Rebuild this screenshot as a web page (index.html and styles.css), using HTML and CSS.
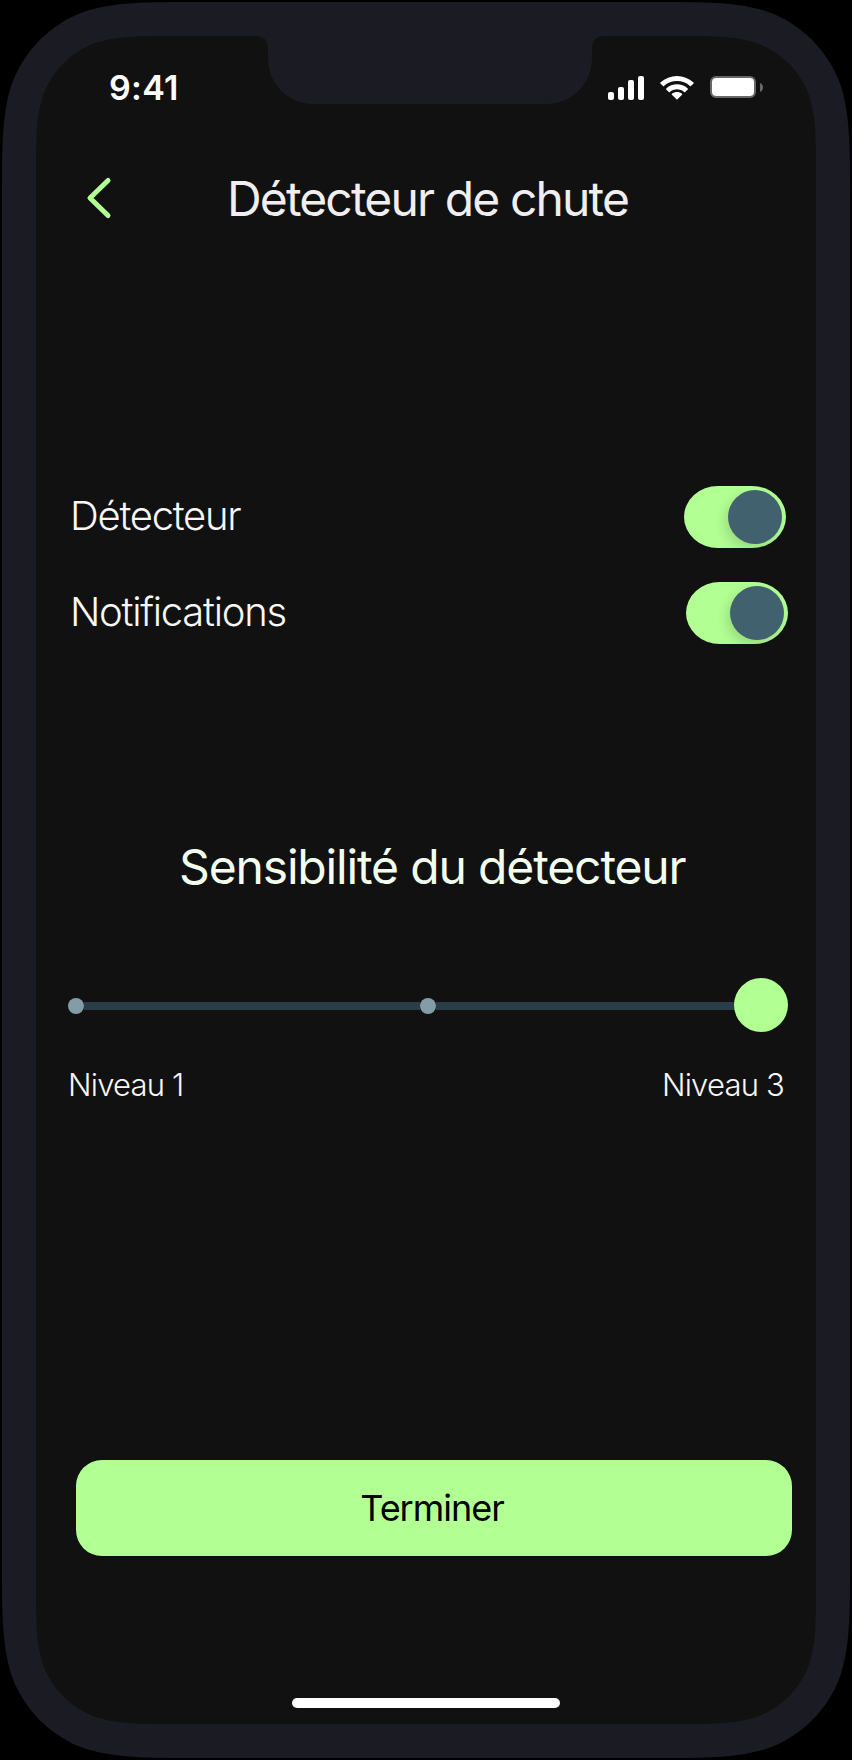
FILE: index.html
```html
<!DOCTYPE html>
<html lang="fr">
<head>
<meta charset="utf-8">
<title>Détecteur de chute</title>
<link rel="stylesheet" href="styles.css">
</head>
<body>
<div class="phone">
  <svg class="frame" width="852" height="1760" viewBox="0 0 852 1760" aria-hidden="true">
    <defs>
      <path id="shell" d="M426 880V2H200.7C143.5 2 114.9 2 84.1 11.7C50.5 24 24 50.5 11.7 84.1C2 114.9 2 143.5 2 200.7V880Z"/>
      <path id="glass" d="M426 880V36H179.7C138.3 36 117.6 36 95.4 43C71 51.9 51.9 71 43 95.4C36 117.6 36 138.3 36 179.7V880Z"/>
    </defs>
    <g fill="#1b1b24">
      <use href="#shell"/>
      <use href="#shell" transform="matrix(-1 0 0 1 852 0)"/>
      <use href="#shell" transform="matrix(1 0 0 -1 0 1760)"/>
      <use href="#shell" transform="matrix(-1 0 0 -1 852 1760)"/>
    </g>
    <g fill="#111">
      <use href="#glass"/>
      <use href="#glass" transform="matrix(-1 0 0 1 852 0)"/>
      <use href="#glass" transform="matrix(1 0 0 -1 0 1760)"/>
      <use href="#glass" transform="matrix(-1 0 0 -1 852 1760)"/>
    </g>
    <path fill="#1b1b24" d="M256 35V36C264 36 268 41 268 49V58C268 84 288 104 314 104H546C572 104 592 84 592 58V49C592 41 596 36 604 36V35Z"/>
  </svg>
  <header class="status">
    <span class="time">9:41</span>
    <svg class="indicators" width="160" height="28" viewBox="0 0 160 28" fill="#fff" aria-hidden="true">
      <rect x="2" y="18" width="6" height="8" rx="2"/>
      <rect x="12" y="13" width="6" height="13" rx="2"/>
      <rect x="22" y="6" width="6" height="20" rx="2"/>
      <rect x="32" y="2" width="6" height="24" rx="2"/>
      <g transform="translate(-2.500 0) scale(1.035 1)">
        <path d="M71 7.1c4.7 0 9.200 1.800 12.600 5 .3.300.700.300.900 0l2.500-2.500c.3-.3.300-.7 0-1C78.100-.1 63.900-.1 55 8.600c-.3.300-.3.700 0 1l2.500 2.500c.2.300.6.300.900 0C61.800 8.900 66.300 7.100 71 7.100Z"/>
        <path d="M71 15.200c2.600 0 5 1 6.900 2.700.3.300.700.300 1 0l2.500-2.500c.3-.3.300-.7 0-1-5.900-5.500-14.900-5.500-20.800 0-.3.300-.3.700 0 1l2.500 2.500c.3.300.700.300 1 0 1.900-1.700 4.300-2.700 6.900-2.700Z"/>
        <path d="M75.900 20.800c.3-.3.300-.7 0-1-2.800-2.400-7-2.400-9.800 0-.3.300-.3.700 0 1l4.400 4.400c.3.300.700.300 1 0Z"/>
      </g>
      <rect x="105" y="3" width="44" height="20" rx="5" fill="none" stroke="#686868" stroke-width="2"/>
      <rect x="106" y="4" width="42" height="18" rx="4"/>
      <path d="M154 9v9c2-.8 3-2.600 3-4.500s-1-3.700-3-4.500Z" fill="#686868"/>
    </svg>
  </header>
  <nav class="topbar">
    <svg class="back" width="28" height="44" viewBox="0 0 28 44" fill="none" stroke="#b2ff94" stroke-width="5" stroke-linecap="round" stroke-linejoin="round" aria-label="Retour"><path d="M22 4.500L4 22L22 39.500"/></svg>
    <h1 class="title">Détecteur de chute</h1>
  </nav>
  <main class="content">
    <section class="settings">
      <div class="row"><span class="label">Détecteur</span><span class="toggle"><i class="knob"></i></span></div>
      <div class="row row-wide"><span class="label">Notifications</span><span class="toggle"><i class="knob"></i></span></div>
    </section>
    <h2 class="subtitle">Sensibilité du détecteur</h2>
    <div class="slider"><i class="stop"></i><i class="line"></i><i class="stop"></i><i class="line"></i><i class="handle"></i></div>
    <div class="levels"><span class="level">Niveau 1</span><span class="level">Niveau 3</span></div>
    <button class="done">Terminer</button>
  </main>
  <div class="home"></div>
</div>
</body>
</html>
```
FILE: styles.css
```css
* { box-sizing: border-box; margin: 0; padding: 0; }
body { background: #000; font-family: Inter, "Liberation Sans", sans-serif; }
.phone { position: relative; display: flex; flex-direction: column; width: 852px; height: 1760px; overflow: hidden; isolation: isolate; }
.frame { position: absolute; inset: 0; z-index: -1; }
.status { display: flex; justify-content: space-between; height: 40px; margin-top: 68px; padding: 0 86px 0 109px; }
.time { font-size: 34px; line-height: 40px; font-weight: 600; letter-spacing: 0.3px; color: #fff; }
.indicators { margin-top: 6px; }
.topbar { display: flex; align-items: center; height: 60px; margin-top: 61px; padding-left: 86px; }
.back { margin-top: -2px; }
.title { margin-left: 113px; font-size: 48px; line-height: 60px; font-weight: 400; letter-spacing: -1.87px; color: #f0eeee; white-space: nowrap; }
.content { display: flex; flex-direction: column; padding-top: 257px; }
.settings { display: flex; flex-direction: column; gap: 34px; }
.row { display: flex; align-items: center; justify-content: space-between; height: 62px; padding: 0 66px 0 70px; }
.row-wide { padding-right: 64px; }
.label { margin-top: -2px; font-size: 40px; line-height: 62px; font-weight: 300; letter-spacing: -1.27px; color: #f7f7f7; }
.toggle { display: flex; justify-content: flex-end; width: 102px; height: 62px; padding: 4px; border-radius: 34px / 31px; background: #b2ff94; overflow: hidden; }
.knob { width: 54px; height: 54px; border-radius: 50%; background: #41616f; box-shadow: -3px 5px 12px rgba(0, 0, 0, .15); }
.subtitle { margin: 193px 0 0 179px; font-size: 48px; line-height: 60px; font-weight: 400; letter-spacing: -1.15px; color: #f3ffee; white-space: nowrap; }
.slider { display: flex; align-items: center; height: 54px; margin: 81px 64px 0 68px; }
.stop { flex: none; width: 16px; height: 16px; margin-top: 2px; border-radius: 50%; background: #829da8; }
.line { flex: none; width: 336px; height: 8px; margin-top: 2px; background: #293e46; }
.line:nth-of-type(4) { width: 300px; margin-right: -2px; }
.handle { flex: none; width: 54px; height: 54px; border-radius: 50%; background: #b2ff94; }
.levels { display: flex; justify-content: space-between; margin-top: 33px; padding: 0 68px 0 68px; }
.level { font-size: 31px; line-height: 40px; font-weight: 300; letter-spacing: -0.8px; color: #f7f7f7; }
.done { height: 96px; margin: 355px 60px 0 76px; padding-right: 4px; border: 0; border-radius: 26px; background: #b2ff94; color: #000; font: 400 36px/60px Inter, "Liberation Sans", sans-serif; letter-spacing: -1px; }
.home { width: 268px; height: 10px; margin: 142px 0 0 292px; border-radius: 5px; background: #fff; }
```
